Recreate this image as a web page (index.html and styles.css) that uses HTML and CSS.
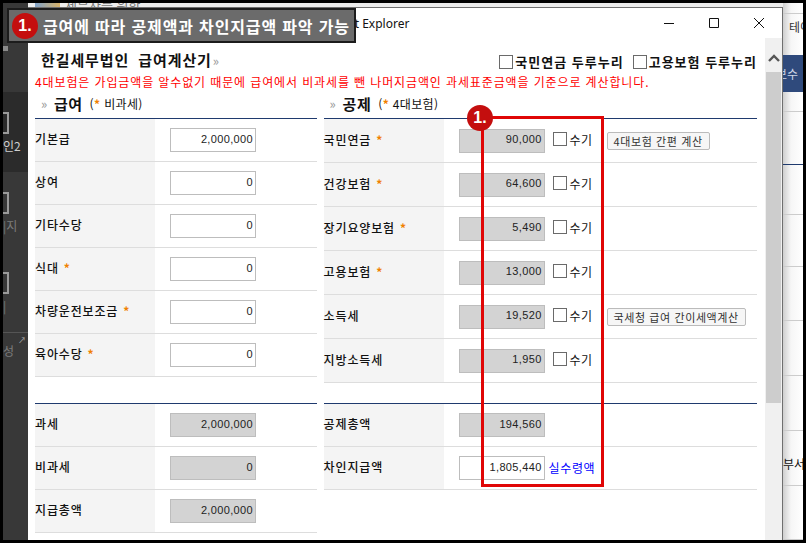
FILE: index.html
```html
<!DOCTYPE html>
<html lang="ko">
<head>
<meta charset="utf-8">
<title>급여계산기</title>
<link rel="stylesheet" href="styles.css">
</head>
<body>
<div class="screen">
  <aside class="side">
    <div class="side-top"><i class="side-dot"></i></div>
    <div class="side-item dark"><i class="side-icon"></i><span>인2</span></div>
    <div class="side-item"><i class="side-icon"></i><span class="faint">|지</span></div>
    <div class="side-item"><i class="side-icon"></i><span class="faint">|</span></div>
    <div class="side-foot"><i class="side-arrow">↗</i><span class="faint">성</span></div>
  </aside>

  <div class="middle">
    <div class="strip"><i class="strip-icon"></i><span class="strip-text">세무사를 위한</span></div>
    <section class="window">
      <header class="titlebar">
        <span class="title-text">Internet Explorer</span>
        <div class="controls">
          <svg width="12" height="12" viewBox="0 0 12 12"><path d="M1 6.5h10" stroke="#111" fill="none"/></svg>
          <svg width="12" height="12" viewBox="0 0 12 12"><path d="M1.5 1.5h9v9h-9z" stroke="#111" fill="none"/></svg>
          <svg width="12" height="12" viewBox="0 0 12 12"><path d="M1 1l10 10M11 1L1 11" stroke="#111" fill="none"/></svg>
        </div>
      </header>
      <div class="viewport">
        <main class="content">
          <div class="top-row">
            <h1 class="page-title">한길세무법인 급여계산기<span class="chev">»</span></h1>
            <div class="top-checks">
              <label class="top-check"><input type="checkbox" class="box big">국민연금 두루누리</label>
              <label class="top-check"><input type="checkbox" class="box big">고용보험 두루누리</label>
            </div>
          </div>
          <p class="notice">4대보험은 가입금액을 알수없기 때문에 급여에서 비과세를 뺀 나머지금액인 과세표준금액을 기준으로 계산합니다.</p>
          <div class="columns">
            <section class="col left">
              <h2 class="sec-head"><span class="chev">»</span><b>급여</b><small>(<em>*</em> 비과세)</small></h2>
              <div class="rows">
                <div class="row"><span class="lab">기본급</span><div class="val"><input class="num" value="2,000,000"></div></div>
                <div class="row"><span class="lab">상여</span><div class="val"><input class="num" value="0"></div></div>
                <div class="row"><span class="lab">기타수당</span><div class="val"><input class="num" value="0"></div></div>
                <div class="row"><span class="lab">식대 <em>*</em></span><div class="val"><input class="num" value="0"></div></div>
                <div class="row"><span class="lab">차량운전보조금 <em>*</em></span><div class="val"><input class="num" value="0"></div></div>
                <div class="row"><span class="lab">육아수당 <em>*</em></span><div class="val"><input class="num" value="0"></div></div>
              </div>
              <div class="rows totals gap-l">
                <div class="row"><span class="lab">과세</span><div class="val"><input class="num ro" readonly value="2,000,000"></div></div>
                <div class="row"><span class="lab">비과세</span><div class="val"><input class="num ro" readonly value="0"></div></div>
                <div class="row"><span class="lab">지급총액</span><div class="val"><input class="num ro" readonly value="2,000,000"></div></div>
              </div>
            </section>
            <section class="col right">
              <h2 class="sec-head"><span class="chev">»</span><b>공제</b><small>(<em>*</em> 4대보험)</small></h2>
              <div class="rows tall">
                <div class="row"><span class="lab">국민연금 <em>*</em></span><div class="val"><input class="num ro" readonly value="90,000"><label class="manual"><input type="checkbox" class="box">수기</label><button class="btn">4대보험 간편 계산</button></div></div>
                <div class="row"><span class="lab">건강보험 <em>*</em></span><div class="val"><input class="num ro" readonly value="64,600"><label class="manual"><input type="checkbox" class="box">수기</label></div></div>
                <div class="row"><span class="lab">장기요양보험 <em>*</em></span><div class="val"><input class="num ro" readonly value="5,490"><label class="manual"><input type="checkbox" class="box">수기</label></div></div>
                <div class="row"><span class="lab">고용보험 <em>*</em></span><div class="val"><input class="num ro" readonly value="13,000"><label class="manual"><input type="checkbox" class="box">수기</label></div></div>
                <div class="row"><span class="lab">소득세</span><div class="val"><input class="num ro" readonly value="19,520"><label class="manual"><input type="checkbox" class="box">수기</label><button class="btn">국세청 급여 간이세액계산</button></div></div>
                <div class="row"><span class="lab">지방소득세</span><div class="val"><input class="num ro" readonly value="1,950"><label class="manual"><input type="checkbox" class="box">수기</label></div></div>
              </div>
              <div class="rows totals gap-r">
                <div class="row"><span class="lab">공제총액</span><div class="val"><input class="num ro" readonly value="194,560"></div></div>
                <div class="row"><span class="lab">차인지급액</span><div class="val"><input class="num" value="1,805,440"><a class="net">실수령액</a></div></div>
              </div>
            </section>
          </div>
        </main>
        <div class="scrollbar">
          <svg class="scroll-up" width="12" height="8" viewBox="0 0 12 8"><path d="M1 7l5-5 5 5" stroke="#555" stroke-width="2.4" fill="none"/></svg>
          <div class="thumb"></div>
        </div>
      </div>
    </section>
  </div>

  <aside class="behind">
    <div class="b-row h14"></div>
    <div class="b-row h42 tab">테이</div>
    <div class="b-band">보수</div>
    <div class="b-row h19"></div>
    <div class="b-row h53 navy"></div>
    <div class="b-row h50"></div>
    <div class="b-row h53"></div>
    <div class="b-row h54"></div>
    <div class="b-row h55"></div>
    <div class="b-row h55"></div>
    <div class="b-row h55 dept">부서</div>
    <div class="b-row h54"></div>
  </aside>
</div>

<div class="caption"><span class="badge">1.</span><span class="caption-text">급여에 따라 공제액과 차인지급액 파악 가능</span></div>
<div class="highlight"><span class="badge hl-badge">1.</span></div>
</body>
</html>
```
FILE: styles.css
```css
* { box-sizing: border-box; }
html, body { margin: 0; padding: 0; }
body {
  width: 806px;
  height: 543px;
  overflow: hidden;
  background: #000;
  position: relative;
  font-family: "Noto Sans CJK KR", "Liberation Sans", sans-serif;
  color: #111;
}
.screen {
  display: grid;
  grid-template-columns: 25px 755px 20px;
  width: 806px;
  height: 543px;
  padding: 3px 3px 3px 3px;
}

/* dark sidebar behind the popup */
.side { background: #383838; display: flex; flex-direction: column; overflow: hidden; color: #cfcfcf; font-size: 12px; }
.side-top { height: 89px; padding-top: 43px; }
.side-dot { display: block; width: 5px; height: 5px; background: #8a8a8a; }
.side-item { height: 80px; padding-top: 20px; display: flex; flex-direction: column; }
.side-item.dark { background: #2b2b2b; }
.side-icon { display: block; width: 6px; height: 22px; border: 2px solid #9a9a9a; border-left: 0; }
.side-item span { line-height: 16px; margin-top: 4px; white-space: nowrap; }
.faint { color: #7c7c7c; }
.side-foot { border-top: 1px solid #555; position: relative; padding-top: 11px; flex: 1; line-height: 14px; }
.side-arrow { position: absolute; right: 2px; top: 0; font-size: 8px; font-style: normal; color: #aaa; }

/* middle */
.middle { display: flex; flex-direction: column; min-width: 0; }
.strip { height: 4px; background: #ececec; overflow: hidden; color: #777; font-size: 13px; line-height: 10px; padding-left: 7px; white-space: nowrap; display: flex; gap: 5px; }
.strip-icon { display: block; width: 25px; height: 4px; background: linear-gradient(90deg, #7fa2c9, #d8b26a); }
.strip-text { display: block; margin-top: -3px; }
.window { flex: 1; display: flex; flex-direction: column; background: #fff; border-top: 1px solid #6f6f6f; border-right: 1px solid #6f6f6f; min-height: 0; }
.titlebar { height: 30px; display: flex; align-items: center; padding-left: 285px; }
.title-text { font-family: "Noto Sans", "Liberation Sans", sans-serif; font-size: 12px; white-space: nowrap; }
.controls { margin-left: auto; display: flex; gap: 33px; padding-right: 17px; }
.viewport { flex: 1; display: flex; min-height: 0; }
.content { width: 737px; padding: 0 8px 0 7px; }
.scrollbar { width: 17px; background: #f0f0f0; display: flex; flex-direction: column; align-items: center; padding-top: 16px; }
.scroll-up { display: block; margin-bottom: 10px; }
.thumb { width: 15px; height: 331px; background: #cdcdcd; }

/* header */
.top-row { height: 34px; display: flex; align-items: flex-end; justify-content: space-between; padding-left: 6px; }
.page-title { margin: 0; font-size: 15px; font-weight: 700; line-height: 22px; color: #111; letter-spacing: .9px; word-spacing: 4px; }
.page-title .chev { margin-left: 1px; }
.chev { color: #999; font-weight: 400; font-size: 13px; }
.top-checks { display: flex; gap: 9px; }
.top-check { display: flex; align-items: center; font-size: 13px; font-weight: 700; line-height: 20px; letter-spacing: 1px; }
.box { appearance: none; -webkit-appearance: none; margin: 0; width: 14px; height: 14px; background: #fff; border: 1px solid #6a6a6a; flex: none; }
.box.big { margin-right: 2px; }
.notice { margin: 0; height: 19px; font-size: 12px; line-height: 19px; color: #f00; white-space: nowrap; letter-spacing: .88px; }

.columns { display: flex; gap: 7px; }
.col.left { width: 282px; }
.col.right { width: 434px; }
.sec-head { margin: 0; height: 28px; display: flex; align-items: center; padding: 0 0 3px 6px; font-weight: 400; border-bottom: 1px solid #1f3a6e; }
.sec-head .chev { width: 13px; }
.sec-head b { font-size: 15px; font-weight: 700; letter-spacing: .5px; }
.sec-head small { font-size: 12px; margin-left: 7px; letter-spacing: .35px; }
em { font-style: normal; color: #f08000; font-weight: 700; }

.rows { display: flex; flex-direction: column; }
.row { height: 43px; display: grid; grid-template-columns: 120px 1fr; border-bottom: 1px solid #ddd; }
.rows.tall .row { height: 44px; }
.lab { background: #f4f4f4; display: flex; align-items: center; gap: 5px; padding-bottom: 3px; font-size: 12px; font-weight: 500; letter-spacing: .85px; white-space: nowrap; }
.val { display: flex; align-items: center; padding-left: 15px; }
.num { width: 86px; height: 24px; border: 1px solid #bdbdbd; background: #fff; text-align: right; font-family: "Liberation Sans", sans-serif; font-size: 11px; letter-spacing: .35px; padding: 0 2px 3px; color: #222; outline: none; }
.num.ro { background: #d3d3d3; }
.gap-l { margin-top: 26px; border-top: 1px solid #1f3a6e; }
.gap-r { margin-top: 20px; border-top: 1px solid #1f3a6e; }
.manual { display: flex; align-items: center; gap: 3px; margin: -2px 0 0 8px; font-size: 12px; letter-spacing: .4px; }
.manual .box { margin-top: -2px; }
.btn { margin-left: 14px; height: 18px; padding: 0 6px; border: 1px solid #bbb; border-radius: 2px; background: #f6f6f6; font-family: inherit; font-size: 11px; line-height: 14px; letter-spacing: .6px; color: #333; white-space: nowrap; }
.net { margin-left: 4px; margin-top: -2px; color: #00f; font-size: 12px; letter-spacing: .6px; white-space: nowrap; }

/* page behind, right */
.behind { display: flex; flex-direction: column; background: linear-gradient(90deg, #cfcfcf, #f6f6f6 40%, #fff); font-size: 12px; overflow: hidden; color: #333; }
.b-row { border-bottom: 1px solid #ccc; overflow: hidden; white-space: nowrap; }
.h14 { height: 11px; }
.h42 { height: 41px; border-bottom: 0; }
.h19 { height: 20px; }
.h53 { height: 53px; }
.h50 { height: 50px; }
.h54 { height: 54px; }
.h55 { height: 55px; }
.navy { border-bottom-color: #1f3a6e; }
.tab { padding: 4px 0 0 6px; }
.b-band { height: 37px; background: #2f4a7c; color: #cdd6e6; display: flex; align-items: center; justify-content: flex-end; padding-right: 5px; white-space: nowrap; }
.dept { padding-top: 24px; color: #111; }

/* annotations */
.caption { position: absolute; left: 7px; top: 8px; width: 349px; height: 35px; background: #6b6b6b; border: 2px solid #1c1c1c; display: flex; align-items: center; padding-left: 3px; gap: 5px; }
.caption-text { color: #fff; font-size: 16px; font-weight: 700; letter-spacing: .85px; white-space: nowrap; }
.badge { width: 26px; height: 26px; border-radius: 50%; background: #c40e0e; color: #fff; display: flex; align-items: center; justify-content: center; font-family: "Liberation Sans", sans-serif; font-size: 16px; font-weight: 700; flex: none; }
.highlight { position: absolute; left: 481px; top: 116px; width: 123px; height: 371px; border: 3px solid #e00606; }
.hl-badge { position: absolute; left: -17px; top: -14px; }
```
